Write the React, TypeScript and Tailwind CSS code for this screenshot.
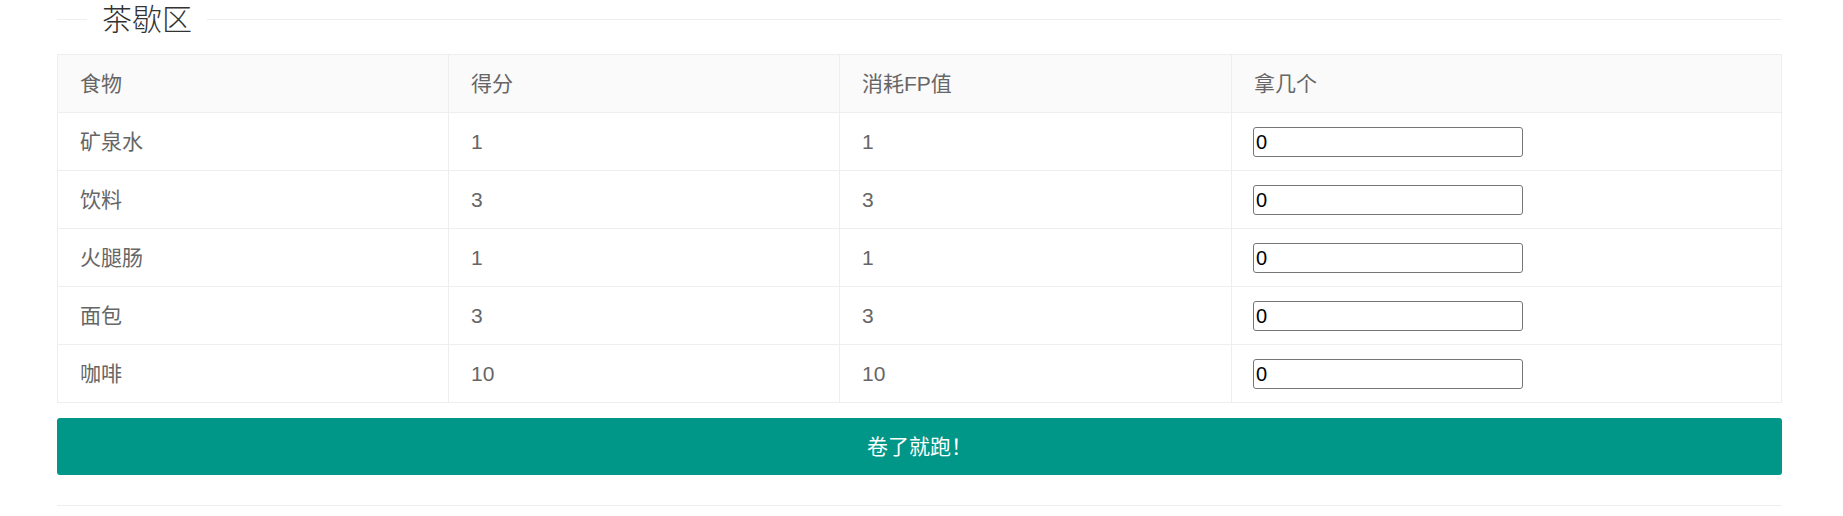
import React from "react";

const rows = [
  { name: "矿泉水", score: "1", fp: "1" },
  { name: "饮料", score: "3", fp: "3" },
  { name: "火腿肠", score: "1", fp: "1" },
  { name: "面包", score: "3", fp: "3" },
  { name: "咖啡", score: "10", fp: "10" },
];

const font = { fontFamily: '"Liberation Sans", "Noto Sans CJK SC", sans-serif' };

export default function App() {
  return (
    <div
      className="w-[1843px] min-h-[516px] bg-white pl-[57px] pr-[61px] text-[#666]"
      style={font}
    >
      <div className="flex h-[39px] items-center">
        <div className="h-px w-[30px] bg-[#eee]" />
        <span className="px-[15px] text-[30px] font-light leading-[39px] text-[#333]">
          茶歇区
        </span>
        <div className="h-px flex-1 bg-[#eee]" />
      </div>

      <div className="mt-[15px] border border-[#eee] text-[21px]">
        <div className="grid h-[57px] grid-cols-[391px_391px_392px_1fr] bg-[#fafafa]">
          <div className="flex items-center border-r border-[#eee] pl-[22px]">食物</div>
          <div className="flex items-center border-r border-[#eee] pl-[22px]">得分</div>
          <div className="flex items-center border-r border-[#eee] pl-[22px]">消耗FP值</div>
          <div className="flex items-center pl-[22px]">拿几个</div>
        </div>
        {rows.map((r) => (
          <div
            key={r.name}
            className="grid h-[58px] grid-cols-[391px_391px_392px_1fr] border-t border-[#eee]"
          >
            <div className="flex items-center border-r border-[#eee] pl-[22px]">{r.name}</div>
            <div className="flex items-center border-r border-[#eee] pl-[22px]">{r.score}</div>
            <div className="flex items-center border-r border-[#eee] pl-[22px]">{r.fp}</div>
            <div className="flex items-center pl-[21px]">
              <input
                type="text"
                defaultValue="0"
                className="h-[30px] w-[270px] rounded-[3px] border border-[#767676] bg-white px-[2px] text-[20px] text-black outline-none"
                style={{ fontFamily: '"Liberation Sans", Arial, sans-serif' }}
              />
            </div>
          </div>
        ))}
      </div>

      <button
        type="button"
        className="mt-[15px] flex h-[57px] w-full items-center justify-center rounded-[3px] bg-[#009688] text-[21px] text-white"
      >
        卷了就跑！
      </button>

      <div className="mt-[30px] h-px w-full bg-[#eee]" />
    </div>
  );
}
